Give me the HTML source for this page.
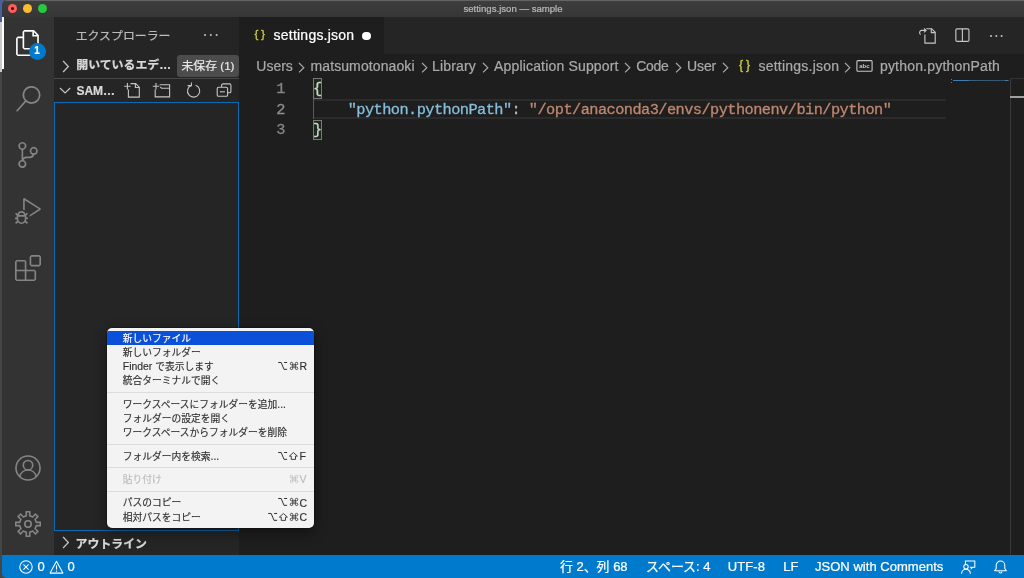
<!DOCTYPE html>
<html lang="ja"><head><meta charset="utf-8"><title>settings.json — sample</title>
<style>
html,body{margin:0;padding:0}
body{width:1024px;height:578px;overflow:hidden;background:#454545;position:relative;font-family:"Liberation Sans",sans-serif;color:#ccc}
.abs{position:absolute}
.j{font-family:"Liberation Sans","Noto Sans CJK JP",sans-serif}
.t{position:absolute;white-space:nowrap;line-height:1;-webkit-text-stroke:0.22px}
.mono{font-family:"Liberation Mono",monospace;-webkit-text-stroke:0}
.code{font-size:15.3px;letter-spacing:-0.55px;-webkit-text-stroke:0.3px}
#win{position:absolute;left:0;top:0;width:1024px;height:578px;background:#1e1e1e;clip-path:inset(0 0 0 2px round 5px 0 0 5px);overflow:hidden;will-change:transform}
#title{position:absolute;left:0;top:0;width:1024px;height:17px;background:linear-gradient(#3e3e3e,#363636);box-shadow:inset 0 1px 0 #636363}
.tl{position:absolute;top:4px;width:9px;height:9px;border-radius:50%}
#act{position:absolute;left:0;top:17px;width:54px;height:538px;background:#333}
#side{position:absolute;left:54px;top:17px;width:185px;height:538px;background:#252526}
#tabs{position:absolute;left:239px;top:17px;width:785px;height:37px;background:#252526}
#tab{position:absolute;left:0;top:0;width:145px;height:37px;background:#1e1e1e}
#status{position:absolute;left:0;top:555px;width:1024px;height:23px;background:#007acc}
.hr{position:absolute;height:1px;background:#dcdcdc;left:0;width:207px}
#menu{position:absolute;left:107px;top:328px;width:207px;height:199.5px;background:#f3f3f3;border-radius:5px;box-shadow:0 0 0 0.5px rgba(0,0,0,.35),0 4px 14px rgba(0,0,0,.45);overflow:hidden}
.mi{position:absolute;left:0;width:207px;height:14.3px}
.mi .l{position:absolute;left:15.8px;top:0.7px;line-height:14.3px;font-size:10.4px;-webkit-text-stroke:0.15px;color:#262626;white-space:nowrap}
.sc{position:absolute;top:0;height:14.3px}
</style></head><body>

<div class="abs" style="left:0;top:0;width:4px;height:22px;background:#4a5f9e"></div>
<div class="abs" style="left:0;top:22px;width:4px;height:50px;background:#c9c9c9"></div>
<div id="win">
<div id="title">
<div class="tl" style="left:8px;background:#fc5f57"></div><div class="abs" style="left:11px;top:7px;width:3px;height:3px;border-radius:50%;background:#4d0000"></div>
<div class="tl" style="left:23px;background:#fdbc2e"></div>
<div class="tl" style="left:38px;background:#28c840"></div>
<div class="t" style="left:2px;width:1022px;text-align:center;top:4.2px;font-size:9.6px;color:#b8b8b8">settings.json — sample</div>
</div>
<div id="act"></div>
<div class="abs" style="left:2px;top:17px;width:2px;height:52px;background:#fff"></div>
<svg class="abs" style="left:15.30px;top:29.90px;width:26.00px;height:26.00px" viewBox="0 0 24 24"><path fill="#fff" d="M17.5 0h-9L7 1.5V6H2.5L1 7.5v15.07L2.5 24h12.07L16 22.57V18h4.7l1.3-1.43V4.5L17.5 0zm0 2.12l2.38 2.38H17.5V2.12zm-3 20.38h-12v-15H7v9.07L8.5 18h6v4.5zm6-6h-12v-15H16V6h4.5v10.5z"/></svg>
<svg class="abs" style="left:15.30px;top:86.10px;width:26.00px;height:26.00px" viewBox="0 0 24 24"><path fill="#858585" d="M15.25 0a8.25 8.25 0 0 0-6.18 13.72L1 22.88l1.12 1 8.05-9.12A8.251 8.251 0 1 0 15.25.01V0zm0 15a6.75 6.75 0 1 1 0-13.5 6.75 6.75 0 0 1 0 13.5z"/></svg>
<svg class="abs" style="left:15.30px;top:142.20px;width:26.00px;height:26.00px" viewBox="0 0 24 24"><path fill="#858585" d="M21.007 8.222A3.738 3.738 0 0 0 15.045 5.2a3.737 3.737 0 0 0 1.156 6.583 2.988 2.988 0 0 1-2.668 1.67h-2.99a4.456 4.456 0 0 0-2.989 1.165V7.4a3.737 3.737 0 1 0-1.494 0v9.117a3.776 3.776 0 1 0 1.816.099 2.99 2.99 0 0 1 2.668-1.667h2.99a4.484 4.484 0 0 0 4.223-3.039 3.736 3.736 0 0 0 3.25-3.687zM4.565 3.738a2.242 2.242 0 1 1 4.484 0 2.242 2.242 0 0 1-4.484 0zm4.484 16.441a2.242 2.242 0 1 1-4.484 0 2.242 2.242 0 0 1 4.484 0zm8.221-9.715a2.242 2.242 0 1 1 0-4.485 2.242 2.242 0 0 1 0 4.485z"/></svg>
<svg class="abs" style="left:15.30px;top:198.40px;width:26.00px;height:26.00px" viewBox="0 0 24 24"><path fill="#858585" d="M10.94 13.5l-1.32 1.32a3.73 3.73 0 0 0-7.24 0L1.06 13.5 0 14.56l1.72 1.72-.22.22V18H0v1.5h1.5v.08c.077.489.214.966.41 1.42L0 22.94 1.06 24l1.65-1.65A4.308 4.308 0 0 0 6 24a4.31 4.31 0 0 0 3.29-1.65L10.94 24 12 22.94 10.09 21c.198-.464.336-.951.41-1.45v-.1H12V18h-1.5v-1.5l-.22-.22L12 14.56l-1.06-1.06zM6 13.5a2.25 2.25 0 0 1 2.25 2.25h-4.5A2.25 2.25 0 0 1 6 13.5zm3 6a3.33 3.33 0 0 1-3 3 3.33 3.33 0 0 1-3-3v-2.25h6v2.25zm14.76-9.9v1.26L13.5 17.37V15.6l8.5-5.37L9 2v9.46a5.07 5.07 0 0 0-1.5-.72V.63L8.64 0l15.12 9.6z"/></svg>
<svg class="abs" style="left:15.30px;top:254.50px;width:26.00px;height:26.00px" viewBox="0 0 24 24"><path fill="#858585" d="M13.5 1.5L15 0h7.5L24 1.5V9l-1.5 1.5H15L13.5 9V1.5zm1.5 0V9h7.5V1.5H15zM0 15V6l1.5-1.5H9L10.5 6v7.5H18l1.5 1.5v7.5L18 24H1.5L0 22.5V15zm9-1.5V6H1.5v7.5H9zM9 15H1.5v7.5H9V15zm1.5 7.5H18V15h-7.5v7.5z"/></svg>
<div class="abs" style="left:28.7px;top:43px;width:17.3px;height:17.3px;border-radius:50%;background:#007acc"></div>
<div class="t" style="left:28.5px;width:17.3px;text-align:center;top:46.3px;font-size:10px;font-weight:bold;color:#fff">1</div>
<svg class="abs" style="left:15.30px;top:455.10px;width:26px;height:26px" viewBox="0 0 26 26" fill="none" stroke="#858585" stroke-width="1.6"><circle cx="13" cy="13" r="12"/><circle cx="13" cy="10.2" r="4.7"/><path d="M4.8 21.6a8.4 8.4 0 0 1 16.4 0"/></svg>
<svg class="abs" style="left:15.30px;top:511.30px;width:26px;height:26px" viewBox="0 0 26 26" fill="none" stroke="#858585" stroke-width="1.6" stroke-linejoin="round"><path d="M11.34 4.66 L11.20 0.73 L14.80 0.73 L14.66 4.66 L17.72 5.93 L20.41 3.05 L22.95 5.59 L20.07 8.28 L21.34 11.34 L25.27 11.20 L25.27 14.80 L21.34 14.66 L20.07 17.72 L22.95 20.41 L20.41 22.95 L17.72 20.07 L14.66 21.34 L14.80 25.27 L11.20 25.27 L11.34 21.34 L8.28 20.07 L5.59 22.95 L3.05 20.41 L5.93 17.72 L4.66 14.66 L0.73 14.80 L0.73 11.20 L4.66 11.34 L5.93 8.28 L3.05 5.59 L5.59 3.05 L8.28 5.93Z"/><circle cx="13" cy="13" r="3.2"/></svg>
<div id="side"></div>
<div class="t" style="left:75.7px;top:26.6px"><span class="j" style="font-size:11.9px;color:#bbbbbb">エクスプローラー</span></div>
<div class="abs" style="left:203.7px;top:33.9px;width:2.1px;height:2.1px;border-radius:50%;background:#c5c5c5;box-shadow:5.8px 0 0 #c5c5c5,11.6px 0 0 #c5c5c5"></div>
<svg class="abs" style="left:61.8px;top:60px;width:8px;height:13px" viewBox="0 0 7.5 12.4"><path d="M1 1l5 5.2-5 5.2" fill="none" stroke="#c5c5c5" stroke-width="1.2"/></svg>
<div class="t" style="left:76.3px;top:60.3px;font-size:11.9px;font-weight:bold;color:#dadada"><span class="j" style="font-size:11.9px;color:#dadada">開いているエデ</span><span style="letter-spacing:0.3px">…</span></div>
<div class="abs" style="left:177px;top:55px;width:61.5px;height:22px;border-radius:3px;background:#4c4c4c"></div>
<div class="t" style="left:181.4px;top:60.2px;font-size:12.2px;color:#e8e8e8"><span class="j" style="font-size:11.9px;color:#e8e8e8">未保存</span><span style="font-size:11.6px"> (1)</span></div>
<div class="abs" style="left:54px;top:78px;width:185px;height:1px;background:#474747"></div>
<svg class="abs" style="left:58.9px;top:86.8px;width:12.2px;height:7.5px" viewBox="0 0 12.4 7.5"><path d="M1 1l5.2 5 5.2-5" fill="none" stroke="#c5c5c5" stroke-width="1.2"/></svg>
<div class="t" style="left:76.6px;top:85px;font-size:12px;font-weight:bold;color:#d8d8d8;letter-spacing:-0.1px">SAM…</div>
<svg class="abs" style="left:123px;top:81.6px;width:18px;height:17px" viewBox="0 0 18 17" fill="none" stroke="#c5c5c5" stroke-width="1.1"><path d="M7.5 1.6h5.2l3.6 3.6v9.9H5.4V7.6"/><path d="M12.4 1.6v3.9h3.9"/><path d="M1.2 4.3h6.4M4.4 1.1v6.4"/></svg>
<svg class="abs" style="left:152.3px;top:81.6px;width:19px;height:17px" viewBox="0 0 19 17" fill="none" stroke="#c5c5c5" stroke-width="1.1"><path d="M7.6 2.7h10v12.2H3.2V7.4"/><path d="M17.6 6.3H9.6L8.3 5"/><path d="M0.8 4.3h6.4M4 1.1v6.4"/></svg>
<svg class="abs" style="left:185px;top:82px;width:17px;height:17px" viewBox="0 0 17 17" fill="none" stroke="#c5c5c5" stroke-width="1.1"><path d="M6.1 3.5A6.1 6.1 0 1 0 10.6 3.3"/><path d="M2.6 3.6h3.8V0.4"/></svg>
<svg class="abs" style="left:214.8px;top:82px;width:17px;height:17px" viewBox="0 0 17 17" fill="none" stroke="#c5c5c5" stroke-width="1.1"><path d="M6.6 5.1V3.2a1.3 1.3 0 0 1 1.3-1.3h6.7a1.3 1.3 0 0 1 1.3 1.3v6.3a1.3 1.3 0 0 1-1.3 1.3h-1.9"/><rect x="2.2" y="5.3" width="10.4" height="9" rx="1.3"/><path d="M4.9 9.8h5"/></svg>
<div class="abs" style="left:54px;top:102px;width:185px;height:429px;box-sizing:border-box;border:1px solid #0a6bb4"></div>
<svg class="abs" style="left:62px;top:536px;width:8px;height:13px" viewBox="0 0 7.5 12.4"><path d="M1 1l5 5.2-5 5.2" fill="none" stroke="#c5c5c5" stroke-width="1.2"/></svg>
<div class="t" style="left:75.6px;top:534.8px"><span class="j" style="font-size:11.9px;font-weight:bold;color:#dadada">アウトライン</span></div>
<div id="tabs"><div id="tab"></div></div>
<div class="t" style="left:254.4px;top:29.2px;font-size:11.3px;color:#cbcb41;letter-spacing:3px;-webkit-text-stroke:0.35px">{}</div>
<div class="t" style="left:273.6px;top:28.2px;font-size:14px;color:#fff;letter-spacing:0.22px">settings.json</div>
<div class="abs" style="left:362.1px;top:31.6px;width:8.8px;height:8.8px;border-radius:50%;background:#fff"></div>
<svg class="abs" style="left:918px;top:27px;width:19px;height:18px" viewBox="0 0 19 18" fill="none" stroke="#c5c5c5" stroke-width="1.15"><path d="M8.2 1.7h5.4l3.6 3.6v10.8H6.9V7.6"/><path d="M13.3 1.7v3.9h3.9"/><path d="M2.6 7.6a2.4 2.4 0 0 1 0.6-4.2h4.6M6 1.5l2 1.9-2 1.9"/></svg>
<svg class="abs" style="left:954px;top:27px;width:17px;height:18px" viewBox="0 0 17 18" fill="none" stroke="#c5c5c5" stroke-width="1.15"><rect x="1.85" y="1.8" width="13.1" height="12.6" rx="1.2"/><path d="M8.4 1.8v12.6"/></svg>
<div class="abs" style="left:990.2px;top:34.8px;width:2.2px;height:2.2px;border-radius:50%;background:#c5c5c5;box-shadow:5.3px 0 0 #c5c5c5,10.6px 0 0 #c5c5c5"></div>
<div class="t bc" style="left:256.3px;top:59.3px;font-size:14px;color:#a9a9a9;letter-spacing:0px">Users</div>
<div class="t bc" style="left:310.5px;top:59.3px;font-size:14px;color:#a9a9a9;letter-spacing:0.1px">matsumotonaoki</div>
<div class="t bc" style="left:432px;top:59.3px;font-size:14px;color:#a9a9a9;letter-spacing:0.18px">Library</div>
<div class="t bc" style="left:494px;top:59.3px;font-size:14px;color:#a9a9a9;letter-spacing:0.17px">Application Support</div>
<div class="t bc" style="left:636.3px;top:59.3px;font-size:14px;color:#a9a9a9;letter-spacing:-0.35px">Code</div>
<div class="t bc" style="left:687.1px;top:59.3px;font-size:14px;color:#a9a9a9;letter-spacing:-0.15px">User</div>
<div class="t bc" style="left:758.5px;top:59.3px;font-size:14px;color:#a9a9a9;letter-spacing:0.23px">settings.json</div>
<div class="t bc" style="left:879.9px;top:59.3px;font-size:14px;color:#a9a9a9;letter-spacing:0.2px">python.pythonPath</div>
<svg class="abs" style="left:297.9px;top:62px;width:7.5px;height:11.4px" viewBox="0 0 7.5 11.4"><path d="M1 1l4.8 4.7L1 10.4" fill="none" stroke="#a9a9a9" stroke-width="1.2"/></svg>
<svg class="abs" style="left:420.6px;top:62px;width:7.5px;height:11.4px" viewBox="0 0 7.5 11.4"><path d="M1 1l4.8 4.7L1 10.4" fill="none" stroke="#a9a9a9" stroke-width="1.2"/></svg>
<svg class="abs" style="left:481.6px;top:62px;width:7.5px;height:11.4px" viewBox="0 0 7.5 11.4"><path d="M1 1l4.8 4.7L1 10.4" fill="none" stroke="#a9a9a9" stroke-width="1.2"/></svg>
<svg class="abs" style="left:624.1px;top:62px;width:7.5px;height:11.4px" viewBox="0 0 7.5 11.4"><path d="M1 1l4.8 4.7L1 10.4" fill="none" stroke="#a9a9a9" stroke-width="1.2"/></svg>
<svg class="abs" style="left:675.3px;top:62px;width:7.5px;height:11.4px" viewBox="0 0 7.5 11.4"><path d="M1 1l4.8 4.7L1 10.4" fill="none" stroke="#a9a9a9" stroke-width="1.2"/></svg>
<svg class="abs" style="left:722.3px;top:62px;width:7.5px;height:11.4px" viewBox="0 0 7.5 11.4"><path d="M1 1l4.8 4.7L1 10.4" fill="none" stroke="#a9a9a9" stroke-width="1.2"/></svg>
<svg class="abs" style="left:844.1px;top:62px;width:7.5px;height:11.4px" viewBox="0 0 7.5 11.4"><path d="M1 1l4.8 4.7L1 10.4" fill="none" stroke="#a9a9a9" stroke-width="1.2"/></svg>
<div class="t" style="left:739px;top:59.4px;font-size:12.2px;color:#cbcb41;letter-spacing:3px;-webkit-text-stroke:0.35px">{}</div>
<svg class="abs" style="left:856px;top:59px;width:17px;height:14px" viewBox="0 0 17 14"><rect x="0.9" y="1.6" width="15.2" height="10.6" rx="1" fill="none" stroke="#c5c5c5" stroke-width="1.1"/><text x="3.2" y="9.3" font-family="Liberation Sans" font-size="6" fill="#c5c5c5" font-weight="bold">abc</text></svg>
<div class="abs" style="left:313px;top:98.9px;width:633px;height:20.6px;box-sizing:border-box;border-top:2px solid #2b2b2b;border-bottom:2px solid #2b2b2b"></div>
<div class="abs" style="left:313px;top:98.9px;width:1px;height:20.6px;background:#5a5a5a"></div>
<div class="abs" style="left:313px;top:78.3px;width:9px;height:20.6px;box-sizing:border-box;border:1px solid #7a7a7a;background:#1b2a1b"></div>
<div class="abs" style="left:313px;top:119.5px;width:9px;height:20.6px;box-sizing:border-box;border:1px solid #7a7a7a;background:#1b2a1b"></div>
<div class="t mono code" style="left:276.3px;top:82.1px;color:#858585">1</div>
<div class="t mono code" style="left:276.3px;top:102.7px;color:#8f8f8f">2</div>
<div class="t mono code" style="left:276.3px;top:123.3px;color:#858585">3</div>
<div class="t mono code" style="left:313.1px;top:82.1px;color:#d4d4d4">{</div>
<div class="t mono code" style="left:313.1px;top:102.7px;color:#bcbcbc;white-space:pre">    <span style="color:#86bedd">"python.pythonPath"</span>: <span style="color:#bf876f">"/opt/anaconda3/envs/pythonenv/bin/python"</span></div>
<div class="t mono code" style="left:313.1px;top:123.3px;color:#d4d4d4">}</div>
<div class="abs" style="left:951px;top:79px;width:1px;height:1px;background:#777"></div><div class="abs" style="left:951px;top:82px;width:1px;height:1px;background:#777"></div>
<div class="abs" style="left:953px;top:80px;width:56px;height:1.4px;background:linear-gradient(90deg,#3f7fb0 0,#3f7fb0 27%,#3b5f7d 30%,#35536c 92%,#3f7fb0 93%,#3f7fb0 97%,#2d4357 100%)"></div>
<div class="abs" style="left:1010px;top:78px;width:1px;height:477px;background:#3a3a3a"></div>
<div class="abs" style="left:1010px;top:78px;width:14px;height:1px;background:#333"></div>
<div class="abs" style="left:1010px;top:96px;width:14px;height:2px;background:#a0a0a0"></div>
<div id="status"></div>
<svg class="abs" style="left:19px;top:560px;width:14px;height:14px" viewBox="0 0 14 14" fill="none" stroke="#fff" stroke-width="1.05"><circle cx="7" cy="7" r="6.2"/><path d="M4.4 4.4l5.2 5.2M9.6 4.4L4.4 9.6"/></svg>
<div class="t" style="left:37.4px;top:560.3px;font-size:13px;color:#fff">0</div>
<svg class="abs" style="left:48.8px;top:559.5px;width:15px;height:14px" viewBox="0 0 15 14" fill="none" stroke="#fff" stroke-width="1.05"><path d="M7.5 1.2l6.4 11.9H1.1z" stroke-linejoin="round"/><path d="M7.5 5.2v4.3M7.5 10.4v1.4"/></svg>
<div class="t" style="left:67.5px;top:560.3px;font-size:13px;color:#fff">0</div>
<div class="t" style="left:560px;top:560.2px;font-size:13px;color:#fff"><span class="j" style="font-size:12.9px;color:#fff">行</span> 2<span class="j" style="font-size:12.9px;color:#fff">、列</span> 68</div>
<div class="t" style="left:646px;top:560.2px;font-size:13px;color:#fff"><span class="j" style="font-size:12.9px;color:#fff">スペース</span>: 4</div>
<div class="t" style="left:727.8px;top:560.2px;font-size:13px;color:#fff;letter-spacing:0.1px">UTF-8</div>
<div class="t" style="left:783.2px;top:560.2px;font-size:13px;color:#fff">LF</div>
<div class="t" style="left:815px;top:560.2px;font-size:13px;color:#fff;letter-spacing:0.03px">JSON with Comments</div>
<svg class="abs" style="left:960px;top:558.5px;width:17px;height:16px" viewBox="0 0 17 16" fill="none" stroke="#fff" stroke-width="1.05"><path d="M5.4 5.6V1.9h9.4v6.3h-2.1l-1.4 1.4V8.2h-1.4"/><circle cx="6" cy="7.7" r="2.2"/><path d="M1.6 14.7a4.4 4.4 0 0 1 8.8 0"/></svg>
<svg class="abs" style="left:993px;top:558.5px;width:15px;height:16px" viewBox="0 0 15 16" fill="none" stroke="#fff" stroke-width="1.05"><path d="M1.6 11.7h11.8l-1.6-2.2V6.3a4.3 4.3 0 0 0-8.6 0v3.2z" stroke-linejoin="round"/><path d="M6 12.4a1.5 1.5 0 0 0 3 0"/></svg>
<div id="menu">
<div class="mi" style="top:2.85px;background:#0a50d8;"><div class="l" style="color:#fff"><span class="j" style="font-size:9.75px;color:#fff">新しいファイル</span></div></div>
<div class="mi" style="top:17.15px;"><div class="l" style="color:#303030"><span class="j" style="font-size:9.75px;color:#303030">新しいフォルダー</span></div></div>
<div class="mi" style="top:31.45px;"><div class="l" style="color:#303030">Finder <span class="j" style="font-size:9.75px;color:#303030">で表示します</span></div><div class="sc" style="left:192.5px;top:-0.1px;line-height:14.3px;font-size:10.5px;color:#303030;-webkit-text-stroke:0.15px">R</div><svg class="sc" style="left:183.00px;top:2.6px;width:8.1px;height:7.9px;overflow:visible" viewBox="0 0 8.1 7.9"><path d="M2.8 1.6A1.25 1.25 0 1 0 1.55 2.85H6.55A1.25 1.25 0 1 0 5.3 1.6V6.3A1.25 1.25 0 1 0 6.55 5.05H1.55A1.25 1.25 0 1 0 2.8 6.3Z" fill="none" stroke="#303030" stroke-width="0.85"/></svg><svg class="sc" style="left:171.40px;top:2.6px;width:9.3px;height:7.9px;overflow:visible" viewBox="0 0 9.3 7.9"><path d="M0.2 0.5H3.2L6 7.35H9.1M6.1 0.5H9.1" fill="none" stroke="#303030" stroke-width="1"/></svg></div>
<div class="mi" style="top:45.75px;"><div class="l" style="color:#303030"><span class="j" style="font-size:9.75px;color:#303030">統合ターミナルで開く</span></div></div>
<div class="hr" style="top:64.06px"></div>
<div class="mi" style="top:69.08px;"><div class="l" style="color:#303030"><span class="j" style="font-size:9.75px;color:#303030">ワークスペースにフォルダーを追加</span>...</div></div>
<div class="mi" style="top:83.38px;"><div class="l" style="color:#303030"><span class="j" style="font-size:9.75px;color:#303030">フォルダーの設定を開く</span></div></div>
<div class="mi" style="top:97.68px;"><div class="l" style="color:#303030"><span class="j" style="font-size:9.75px;color:#303030">ワークスペースからフォルダーを削除</span></div></div>
<div class="hr" style="top:115.99px"></div>
<div class="mi" style="top:121.01px;"><div class="l" style="color:#303030"><span class="j" style="font-size:9.75px;color:#303030">フォルダー内を検索</span>...</div><div class="sc" style="left:192.5px;top:-0.1px;line-height:14.3px;font-size:10.5px;color:#303030;-webkit-text-stroke:0.15px">F</div><svg class="sc" style="left:182.40px;top:2.6px;width:8.75px;height:7.9px;overflow:visible" viewBox="0 0 8.75 7.9"><path d="M4.38 0.5L8.4 4.1H6.5V7.4H2.25V4.1H0.35z" fill="none" stroke="#303030" stroke-width="0.9" stroke-linejoin="round"/></svg><svg class="sc" style="left:170.80px;top:2.6px;width:9.3px;height:7.9px;overflow:visible" viewBox="0 0 9.3 7.9"><path d="M0.2 0.5H3.2L6 7.35H9.1M6.1 0.5H9.1" fill="none" stroke="#303030" stroke-width="1"/></svg></div>
<div class="hr" style="top:139.32px"></div>
<div class="mi" style="top:144.34px;"><div class="l" style="color:#bdbdbd"><span class="j" style="font-size:9.75px;color:#bdbdbd">貼り付け</span></div><div class="sc" style="left:192.5px;top:-0.1px;line-height:14.3px;font-size:10.5px;color:#bdbdbd;-webkit-text-stroke:0.15px">V</div><svg class="sc" style="left:183.00px;top:2.6px;width:8.1px;height:7.9px;overflow:visible" viewBox="0 0 8.1 7.9"><path d="M2.8 1.6A1.25 1.25 0 1 0 1.55 2.85H6.55A1.25 1.25 0 1 0 5.3 1.6V6.3A1.25 1.25 0 1 0 6.55 5.05H1.55A1.25 1.25 0 1 0 2.8 6.3Z" fill="none" stroke="#bdbdbd" stroke-width="0.85"/></svg></div>
<div class="hr" style="top:162.66px"></div>
<div class="mi" style="top:167.67px;"><div class="l" style="color:#303030"><span class="j" style="font-size:9.75px;color:#303030">パスのコピー</span></div><div class="sc" style="left:192.5px;top:-0.1px;line-height:14.3px;font-size:10.5px;color:#303030;-webkit-text-stroke:0.15px">C</div><svg class="sc" style="left:183.00px;top:2.6px;width:8.1px;height:7.9px;overflow:visible" viewBox="0 0 8.1 7.9"><path d="M2.8 1.6A1.25 1.25 0 1 0 1.55 2.85H6.55A1.25 1.25 0 1 0 5.3 1.6V6.3A1.25 1.25 0 1 0 6.55 5.05H1.55A1.25 1.25 0 1 0 2.8 6.3Z" fill="none" stroke="#303030" stroke-width="0.85"/></svg><svg class="sc" style="left:171.40px;top:2.6px;width:9.3px;height:7.9px;overflow:visible" viewBox="0 0 9.3 7.9"><path d="M0.2 0.5H3.2L6 7.35H9.1M6.1 0.5H9.1" fill="none" stroke="#303030" stroke-width="1"/></svg></div>
<div class="mi" style="top:181.97px;"><div class="l" style="color:#303030"><span class="j" style="font-size:9.75px;color:#303030">相対パスをコピー</span></div><div class="sc" style="left:192.5px;top:-0.1px;line-height:14.3px;font-size:10.5px;color:#303030;-webkit-text-stroke:0.15px">C</div><svg class="sc" style="left:183.00px;top:2.6px;width:8.1px;height:7.9px;overflow:visible" viewBox="0 0 8.1 7.9"><path d="M2.8 1.6A1.25 1.25 0 1 0 1.55 2.85H6.55A1.25 1.25 0 1 0 5.3 1.6V6.3A1.25 1.25 0 1 0 6.55 5.05H1.55A1.25 1.25 0 1 0 2.8 6.3Z" fill="none" stroke="#303030" stroke-width="0.85"/></svg><svg class="sc" style="left:172.40px;top:2.6px;width:8.75px;height:7.9px;overflow:visible" viewBox="0 0 8.75 7.9"><path d="M4.38 0.5L8.4 4.1H6.5V7.4H2.25V4.1H0.35z" fill="none" stroke="#303030" stroke-width="0.9" stroke-linejoin="round"/></svg><svg class="sc" style="left:160.80px;top:2.6px;width:9.3px;height:7.9px;overflow:visible" viewBox="0 0 9.3 7.9"><path d="M0.2 0.5H3.2L6 7.35H9.1M6.1 0.5H9.1" fill="none" stroke="#303030" stroke-width="1"/></svg></div>
</div>
</div></body></html>
